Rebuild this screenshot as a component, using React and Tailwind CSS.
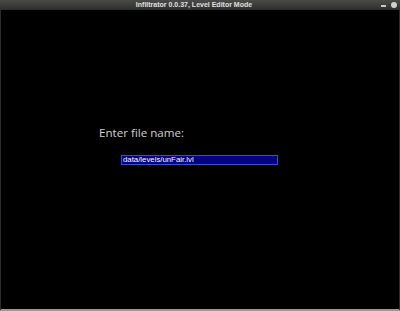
export default function App() {
  return (
    <div className="w-[400px] h-[311px] flex flex-col bg-black overflow-hidden">
      <div className="h-[10px] flex items-center relative bg-gradient-to-b from-[#4a4a48] to-[#2e2e2c]">
        <div
          className="flex-1 text-center pr-[12px] text-[7px] leading-[10px] font-bold text-[#e0e0e0]"
          style={{ fontFamily: '"Liberation Sans", sans-serif' }}
        >
          Infiltrator 0.0.37, Level Editor Mode
        </div>
        <div className="absolute right-[3px] top-[2px] flex items-center gap-[5px]">
          <div className="w-[5px] h-[2px] bg-[#c8c8c8] mt-[1px]"></div>
          <div className="w-[6px] h-[6px] rounded-full bg-[#d0d0d0]"></div>
        </div>
      </div>
      <div className="flex-1 flex flex-col border-l border-r border-[#2c2c2c] border-b-2 border-b-[#9a9a9a]">
        <div
          className="pl-[98px] pt-[115px] text-[11.6px] leading-[16px] text-[#d2d2d2]"
          style={{ fontFamily: '"Open Sans", sans-serif' }}
        >
          Enter file name:
        </div>
        <div className="pl-[120px] pt-[14px]">
          <div
            className="w-[157px] h-[10px] bg-[#000080] border border-[#3a4fd0] text-white text-[7.8px] leading-[8px] pl-[1px]"
            style={{ fontFamily: '"Liberation Sans", sans-serif' }}
          >
            data/levels/unFair.lvl
          </div>
        </div>
      </div>
    </div>
  );
}
